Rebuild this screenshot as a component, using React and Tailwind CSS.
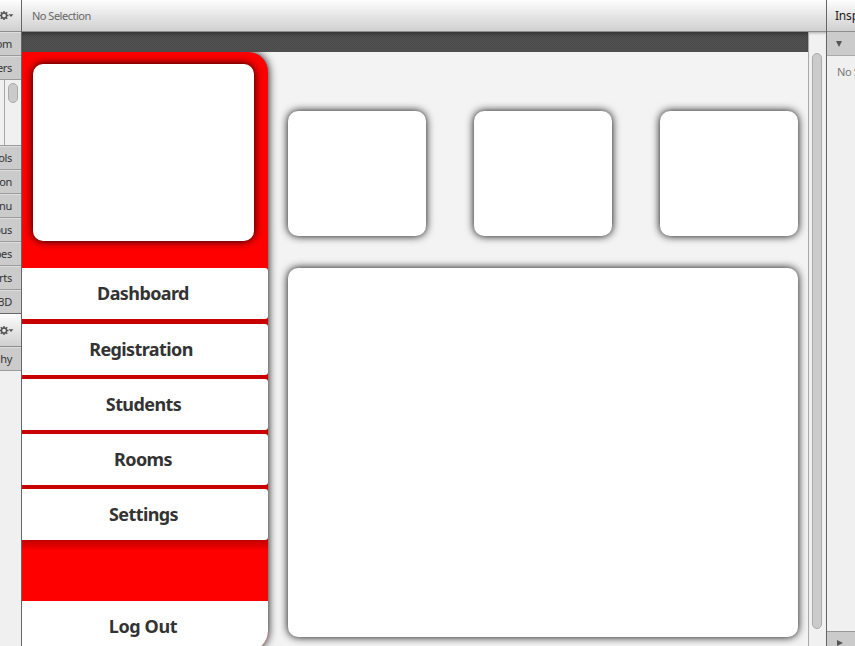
import React from 'react';

const bar = 'bg-linear-to-b from-[#fdfdfd] to-[#d0d0d0] border-b border-[#8d8d8d] shrink-0';
const ui = 'text-[11px] whitespace-nowrap';

function Gear() {
  return (
    <svg className="h-[9px] w-[14px] shrink-0 overflow-visible" viewBox="0 0 14 9">
      <circle cx="4" cy="4.5" r="2.6" fill="none" stroke="#555" strokeWidth="1.5" />
      <path d="M4 0v2M4 7v2M-.5 4.5h2M6.5 4.5h2M.8 1.3l1.4 1.4M5.8 6.3l1.4 1.4M.8 7.7l1.4-1.4M5.8 2.7l1.4-1.4" stroke="#555" strokeWidth="1.5" />
      <path d="M8.6 3.3h4.8L11 6z" fill="#555" />
    </svg>
  );
}

function Section({ label, last }) {
  return (
    <div className={`flex h-6 shrink-0 items-center justify-end overflow-hidden border-b border-t border-t-[#dedede] bg-[#cbcbcb] pr-[9px] tracking-[-0.3px] text-[#333] ${ui} ${last ? 'border-b-[#666]' : 'border-b-[#9b9b9b]'}`}>
      {label}
    </div>
  );
}

function Card({ className }) {
  return <div className={`rounded-[10px] bg-white shadow-[0_0_9px_#000] ${className}`} />;
}

function MenuButton({ label, className }) {
  return (
    <div className={`flex shrink-0 items-center justify-center bg-white text-[18px] font-bold leading-none text-[#333] ${className}`}>
      <span>{label}</span>
    </div>
  );
}

export default function App() {
  return (
    <div className="flex h-[646px] w-[855px] overflow-hidden bg-[#f0f0f0] font-['Noto_Sans','Open_Sans',sans-serif]">
      <aside className="flex w-[22px] shrink-0 flex-col overflow-hidden border-r border-[#666]">
        <div className={`flex h-8 items-center justify-end pr-[7px] ${bar}`}><Gear /></div>
        <Section label="om" />
        <Section label="ers" />
        <div className="flex h-[66px] shrink-0 border-b border-[#9b9b9b]">
          <div className="w-[5px] border-r border-[#aaa]" />
          <div className="ml-[3px] mt-[3px] h-5 w-[10px] rounded-full border border-[#aaa] bg-[#cbcbcb]" />
        </div>
        <Section label="ols" />
        <Section label="on" />
        <Section label="nu" />
        <Section label="ous" />
        <Section label="pes" />
        <Section label="rts" />
        <Section label="3D" last />
        <div className={`flex h-[33px] items-center justify-end pr-[7px] ${bar}`}><Gear /></div>
        <Section label="hy" />
      </aside>

      <main className="flex w-[804px] shrink-0 flex-col">
        <div className={`flex h-8 items-center pl-[10px] pt-0.5 tracking-[-0.5px] text-[#666] ${ui} ${bar}`}>No Selection</div>
        <div className="flex h-[614px]">
          <div className="flex w-[786px] shrink-0 flex-col overflow-hidden">
            <div className="h-5 shrink-0 bg-[#4d4d4d] bg-[repeating-conic-gradient(#535353_0_25%,#494949_0_50%)] bg-size-[2px_2px] shadow-[inset_0_4px_4px_-2px_rgba(0,0,0,0.35)]" />
            <div className="flex h-[594px] shrink-0 overflow-hidden bg-[#f3f3f3]">
              <nav className="flex h-[599px] w-[246px] shrink-0 flex-col rounded-r-[20px] bg-[#f00] pt-3 shadow-[0_0_10px_#000]">
                <Card className="ml-[11px] h-[177px] w-[221px] shrink-0" />
                <div className="mt-[27px] flex shrink-0 flex-col gap-1 overflow-hidden bg-[#c80000]">
                  <MenuButton label="Dashboard" className="mb-px h-[51px] rounded-r-[3px] pb-0.5 pr-1 tracking-[-0.6px]" />
                  <MenuButton label="Registration" className="h-[51px] rounded-r-[3px] pb-0.5 pr-2 tracking-[-0.6px]" />
                  <MenuButton label="Students" className="h-[51px] rounded-r-[3px] pb-0.5 pr-[3px] tracking-[-0.6px]" />
                  <MenuButton label="Rooms" className="h-[51px] rounded-r-[3px] pb-0.5 pr-1 tracking-[-0.6px]" />
                  <MenuButton label="Settings" className="h-[51px] rounded-r-[3px] pb-0.5 pr-[3px] tracking-[-0.6px]" />
                </div>
                <div className="h-[61px] shrink-0 bg-linear-to-b from-[#c00000] via-[#f00] via-[18%] to-[#f00]" />
                <MenuButton label="Log Out" className="h-[50px] rounded-br-[20px] pr-1 tracking-[-0.4px]" />
              </nav>
              <section className="ml-5 flex w-[510px] shrink-0 flex-col pt-[59px]">
                <div className="flex justify-between">
                  <Card className="h-[125px] w-[138px]" />
                  <Card className="h-[125px] w-[138px]" />
                  <Card className="h-[125px] w-[138px]" />
                </div>
                <Card className="mt-8 h-[369px] w-[510px] shrink-0" />
              </section>
            </div>
          </div>
          <div className="flex w-[18px] shrink-0 border-l border-[#aaa] bg-[#f1f1f1] pl-[3px] pt-[21px] shadow-[inset_0_3px_3px_-2px_rgba(0,0,0,0.3)]">
            <div className="h-[576px] w-[10px] rounded-full border border-[#aaa] bg-[#cbcbcb]" />
          </div>
        </div>
      </main>

      <aside className="flex w-[29px] shrink-0 flex-col overflow-hidden border-l border-[#666]">
        <div className={`flex h-8 items-center pl-2 pt-px text-[12px] tracking-[-0.2px] whitespace-nowrap text-[#222] ${bar}`}>Insp</div>
        <div className="flex h-6 shrink-0 items-center border-b border-[#aaa] bg-[#cbcbcb] pl-[9px]">
          <svg className="h-[6px] w-[6px]" viewBox="0 0 6 6"><path d="M0 0h6L3 6z" fill="#555" /></svg>
        </div>
        <div className={`flex h-8 shrink-0 items-center pl-[10px] tracking-[-0.4px] text-[#777] ${ui}`}>No S</div>
        <div className="grow" />
        <div className="flex h-[15px] shrink-0 items-end border-t border-[#999] bg-[#cbcbcb] pl-[10px]">
          <svg className="h-[6px] w-[6px]" viewBox="0 0 6 6"><path d="M0 0v6l6-3z" fill="#555" /></svg>
        </div>
      </aside>
    </div>
  );
}
